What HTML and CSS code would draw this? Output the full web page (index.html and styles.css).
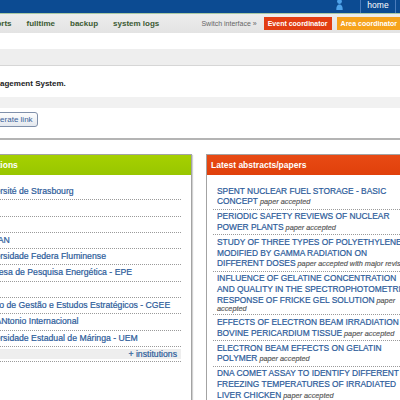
FILE: index.html
```html
<!DOCTYPE html>
<html lang="en">
<head>
<meta charset="utf-8">
<title>Event Management System</title>
<link rel="stylesheet" href="styles.css">
</head>
<body>
<div class="page">
  <header class="topbar">
    <svg class="user-icon" width="7" height="11" viewBox="0 0 7 11" aria-hidden="true">
      <circle cx="3.5" cy="2.6" r="2.4" fill="#4fa3ea"/>
      <path d="M0.3 11 C0.3 7 1.6 5.6 3.5 5.6 C5.4 5.6 6.7 7 6.7 11 Z" fill="#4fa3ea"/>
    </svg>
    <a class="home-tab" href="#">home</a>
  </header>
  <nav class="menu">
    <div class="menu-links">
      <a href="#">reports</a>
      <a href="#">fulltime</a>
      <a href="#">backup</a>
      <a href="#">system logs</a>
    </div>
    <div class="switch">
      <span class="switch-label">Switch interface »</span>
      <a class="btn btn-event" href="#">Event coordinator</a>
      <a class="btn btn-area" href="#">Area coordinator</a>
    </div>
  </nav>

  <section class="intro">
    <div class="band band-top"></div>
    <p class="intro-text">Event Management System.</p>
    <div class="band band-mid"></div>
    <div class="form-row"><button class="gen-btn" type="button">Generate link</button></div>
  </section>

  <div class="panels">
    <div class="panel">
      <h2 class="panel-head head-green">Institutions</h2>
      <ul class="list list-inst">
        <li><a href="#">Université de Strasbourg</a></li>
        <li><a href="#">IRD</a></li>
        <li><a href="#">IEN</a></li>
        <li><a href="#">UNIFAN</a></li>
        <li><a href="#">Universidade Federa Fluminense</a></li>
        <li><a href="#">Empresa de Pesquisa Energética - EPE</a></li>
        <li><a href="#">IPEN</a></li>
        <li><a href="#">Centro de Gestão e Estudos Estratégicos - CGEE</a></li>
        <li><a href="#">São ANtonio Internacional</a></li>
        <li><a href="#">Universidade Estadual de Máringa - UEM</a></li>
        <li class="more"><a href="#">+ institutions</a></li>
      </ul>
    </div>
    <div class="panel">
      <h2 class="panel-head head-red">Latest abstracts/papers</h2>
      <ul class="list list-papers">
        <li><a href="#">SPENT NUCLEAR FUEL STORAGE - BASIC<br>CONCEPT</a> <span class="status">paper accepted</span></li>
        <li><a href="#">PERIODIC SAFETY REVIEWS OF NUCLEAR<br>POWER PLANTS</a> <span class="status">paper accepted</span></li>
        <li><a href="#">STUDY OF THREE TYPES OF POLYETHYLENE<br>MODIFIED BY GAMMA RADIATION ON<br>DIFFERENT DOSES</a> <span class="status">paper accepted with major revisions</span></li>
        <li><a href="#">INFLUENCE OF GELATINE CONCENTRATION<br>AND QUALITY IN THE SPECTROPHOTOMETRIC<br>RESPONSE OF FRICKE GEL SOLUTION</a> <span class="status">paper<br>accepted</span></li>
        <li><a href="#">EFFECTS OF ELECTRON BEAM IRRADIATION ON<br>BOVINE PERICARDIUM TISSUE</a> <span class="status">paper accepted</span></li>
        <li><a href="#">ELECTRON BEAM EFFECTS ON GELATIN<br>POLYMER</a> <span class="status">paper accepted</span></li>
        <li><a href="#">DNA COMET ASSAY TO IDENTIFY DIFFERENT<br>FREEZING TEMPERATURES OF IRRADIATED<br>LIVER CHICKEN</a> <span class="status">paper accepted</span></li>
      </ul>
    </div>
  </div>
</div>
</body>
</html>
```
FILE: styles.css
```css
* { box-sizing: border-box; }
html, body { margin: 0; padding: 0; background: #fff; }
body {
  width: 400px;
  height: 400px;
  overflow: hidden;
  font-family: "Liberation Sans", Arial, sans-serif;
  color: #222;
}
a { text-decoration: none; }

.page {
  margin-left: -40px;
  width: 480px;
}

/* top blue bar */
.topbar {
  height: 13px;
  background: #0c4b92;
  display: flex;
  justify-content: flex-end;
  align-items: flex-start;
  padding-right: 44px;
}
.user-icon {
  display: block;
  margin-right: 17px;
  margin-top: -1px;
}
.home-tab {
  width: 36px;
  height: 13px;
  border-left: 1px solid #4a7cbc;
  border-right: 1px solid #4a7cbc;
  color: #fff;
  font-size: 8.5px;
  line-height: 10px;
  text-align: center;
}

/* grey menu */
.menu {
  height: 20px;
  border-top: 1px solid #a9c9a4;
  background: linear-gradient(#ededed, #e3e3e3);
  display: flex;
  align-items: center;
  justify-content: space-between;
  padding-left: 24px;
  padding-right: 39px;
}
.menu-links { display: flex; gap: 15px; }
.menu-links a {
  font-size: 8px;
  font-weight: bold;
  color: #3b5a33;
}
.switch { display: flex; align-items: center; }
.switch-label {
  font-size: 7px;
  color: #666;
  margin-right: 7px;
}
.btn {
  height: 13px;
  line-height: 13px;
  padding: 0 4px;
  font-size: 7px;
  font-weight: bold;
  color: #fff;
}
.btn-event { background: #e23d12; margin-right: 5px; }
.btn-area { background: #f6a31b; }

/* intro block */
.intro { padding-top: 16px; }
.band { width: 100%; }
.band-top {
  height: 17px;
  background: #eeeeee;
  border-bottom: 1px solid #d6d6d6;
}
.intro-text {
  margin: 13px 0 0 0;
  font-size: 8px;
  line-height: 10px;
  font-weight: bold;
  color: #222;
}
.band-mid {
  height: 11px;
  margin-top: 8px;
  background: #f1f1f1;
}
.form-row {
  margin-top: 4px;
  padding-left: 20px;
  padding-bottom: 11px;
  border-bottom: 2px solid #b4b4b4;
}
.gen-btn {
  display: block;
  height: 15px;
  padding: 0 4px;
  font-family: "Liberation Sans", Arial, sans-serif;
  font-size: 8px;
  color: #3a5f98;
  background: linear-gradient(#fdfdfd, #e4e8ee);
  border: 1px solid #8090aa;
  border-radius: 3px;
}

/* panels */
.panels {
  display: flex;
  gap: 14px;
  margin-top: 14px;
  margin-left: 7px;
}
.panel {
  width: 225px;
  min-height: 270px;
  border: 1px solid #a3a3a3;
  box-shadow: 1px 1px 1px rgba(0, 0, 0, 0.18);
  background: #fff;
}
.panel-head {
  margin: 0;
  height: 20px;
  line-height: 20px;
  padding-left: 4px;
  font-size: 8.5px;
  font-weight: bold;
  color: #fff;
}
.head-green { background: linear-gradient(#a6d000, #98c600); }
.head-red { background: linear-gradient(#e84a14, #e0400b); }

.list {
  list-style: none;
  margin: 9px 10px 0 6px;
  padding: 0;
}
.list li {
  border-bottom: 1px dotted #9a9a9a;
  padding-left: 4px;
}
.list a {
  color: #2b5b9a;
  -webkit-text-stroke: 0.2px #2b5b9a;
}

.list-inst li {
  padding-top: 2px;
  padding-bottom: 3px;
  font-size: 8.7px;
  line-height: 10.3px;
  white-space: nowrap;
}
.list-inst li.more {
  margin-top: 2px;
  padding: 0 0 2px 0;
  border-bottom: 1px dotted #9a9a9a;
}
.list-inst li.more a {
  display: block;
  background: #eeeeee;
  text-align: right;
  padding-right: 4px;
  line-height: 10px;
}

.list-papers { margin-right: 0; }
.list-papers li {
  padding-top: 1.6px;
  padding-bottom: 1.7px;
  font-size: 7.3px;
  line-height: 7.2px;
  white-space: nowrap;
}
.list-papers a {
  font-size: 8.4px;
  line-height: 10.7px;
}
.status {
  font-style: italic;
  color: #555;
  -webkit-text-stroke: 0.15px #555;
}
```
